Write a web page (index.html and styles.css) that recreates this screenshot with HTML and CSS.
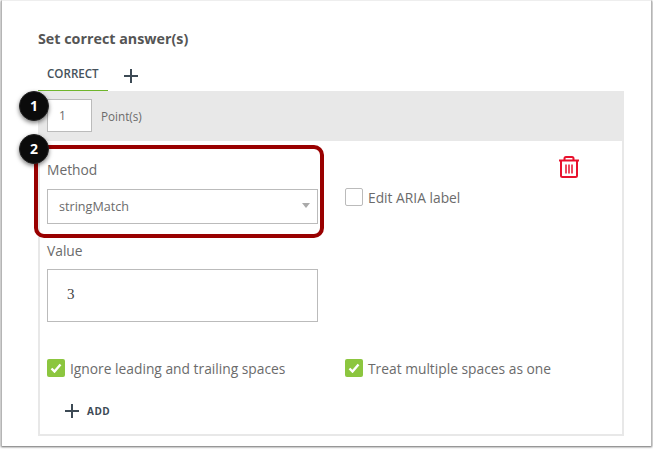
FILE: index.html
```html
<!DOCTYPE html>
<html lang="en">
<head>
    <meta charset="UTF-8">
    <title>Set correct answer(s)</title>
    <link rel="stylesheet" href="styles.css">
</head>
<body>
    <div class="frame">
        <h1 class="title">Set correct answer(s)</h1>
        <div class="tabs">
            <div class="tab">CORRECT</div>
            <svg class="tab-add" width="14" height="14" viewBox="0 0 14 14"><path d="M7 0v14M0 7h14" stroke="#3d4a55" stroke-width="2"/></svg>
        </div>
        <div class="card">
            <div class="points">
                <div class="points-input">1</div>
                <span class="points-label">Point(s)</span>
            </div>
            <div class="card-body">
                <div class="method-row">
                    <div class="col">
                        <div class="label">Method</div>
                        <div class="select">stringMatch<span class="arrow"></span></div>
                    </div>
                    <label class="check aria">
                        <span class="box"></span>Edit ARIA label
                    </label>
                    <svg class="trash" width="20" height="22" viewBox="0 0 20 22" fill="none" stroke="#e8112d" stroke-width="2">
                        <path d="M0 4.500h20"/>
                        <path d="M5.500 4.500V2.500Q5.500 1 7 1h6q1.500 0 1.500 1.500v2"/>
                        <path d="M2 4.500v15Q2 21 3.500 21h13q1.500 0 1.500-1.500v-15"/>
                        <path d="M7 8.500v9M10 8.500v9M13 8.500v9" stroke-width="1.500"/>
                    </svg>
                </div>
                <div class="label value-label">Value</div>
                <div class="value-input">3</div>
                <div class="checks">
                    <label class="check"><span class="box on"><svg width="12" height="10" viewBox="0 0 12 10"><path d="M1.500 5.500l3 3 6-7" fill="none" stroke="#fff" stroke-width="2.400"/></svg></span>Ignore leading and trailing spaces</label>
                    <label class="check"><span class="box on"><svg width="12" height="10" viewBox="0 0 12 10"><path d="M1.500 5.500l3 3 6-7" fill="none" stroke="#fff" stroke-width="2.400"/></svg></span>Treat multiple spaces as one</label>
                </div>
                <div class="add">
                    <svg width="14" height="14" viewBox="0 0 14 14"><path d="M7 0v14M0 7h14" stroke="#3d4a55" stroke-width="2"/></svg>
                    <span>ADD</span>
                </div>
            </div>
        </div>

        <!-- annotations on top of the screenshot -->
        <div class="highlight"></div>
        <div class="badge badge-1">1</div>
        <div class="badge badge-2">2</div>
    </div>
</body>
</html>
```

FILE: styles.css
```css
html, body {
    margin: 0;
    padding: 0;
    background: #fff;
}
body {
    width: 653px;
    height: 449px;
    overflow: hidden;
    font-family: "Open Sans", sans-serif;
    color: #6b6b6b;
}
.frame {
    position: relative;
    box-sizing: border-box;
    width: 651px;
    height: 446px;
    margin-left: 1px;
    padding: 29px 28px 0 36px;
    background: #fff;
    border-top: 1px solid #eee;
    border-left: 1px solid #b5b5b5;
    border-right: 1px solid #b5b5b5;
    box-shadow: 0 1px 2px rgba(0, 0, 0, .6);
}
.title {
    margin: 0;
    font-size: 14.3px;
    line-height: 17px;
    font-weight: 700;
    color: #555;
}
.tabs {
    display: flex;
    align-items: center;
    margin-top: 11px;
    height: 33px;
}
.tab {
    box-sizing: border-box;
    width: 70px;
    height: 33px;
    padding: 8px 0 0 9px;
    border-bottom: 1px solid #6fb52c;
    font-size: 11.6px;
    line-height: 16px;
    font-weight: 600;
    color: #46525c;
}
.tab-add {
    margin: 2px 0 0 16px;
}
.card {
    box-sizing: border-box;
    width: 586px;
    height: 345px;
    border: 1px solid #e8e8e8;
    border-top: 0;
    border-width: 0 2px 2px 2px;
}
.points {
    display: flex;
    align-items: center;
    height: 50px;
    margin: 0 -2px;
    padding-left: 9px;
    background: #e8e8e8;
}
.points-input {
    box-sizing: border-box;
    width: 45px;
    height: 33px;
    margin-top: -1px;
    padding-left: 11px;
    background: #fff;
    border: 1px solid #bbb;
    font-size: 12px;
    line-height: 31px;
}
.points-label {
    margin-left: 9px;
    font-size: 11.7px;
}
.card-body {
    padding: 19px 0 0 7px;
}
.method-row {
    display: flex;
    align-items: flex-start;
}
.col {
    width: 271px;
}
.label {
    font-size: 13.8px;
    line-height: 20px;
}
.select {
    position: relative;
    box-sizing: border-box;
    height: 35px;
    margin-top: 9px;
    padding-left: 11px;
    border: 1px solid #bbb;
    font-size: 12.6px;
    line-height: 33px;
}
.arrow {
    position: absolute;
    right: 7px;
    top: 13px;
    border-left: 4px solid transparent;
    border-right: 4px solid transparent;
    border-top: 5px solid #aaa;
}
.check {
    display: flex;
    align-items: flex-start;
    font-size: 13.8px;
    line-height: 20px;
}
.aria {
    margin: 28px 0 0 27px;
}
.box {
    box-sizing: border-box;
    display: flex;
    align-items: center;
    justify-content: center;
    width: 18px;
    height: 18px;
    margin-right: 5px;
    border: 1px solid #bbb;
    border-radius: 2px;
}
.box.on {
    background: #8cc63f;
    border: 0;
}
.trash {
    margin: -4px 0 0 auto;
    margin-right: 43px;
}
.value-label {
    margin-top: 17px;
}
.value-input {
    box-sizing: border-box;
    width: 271px;
    height: 53px;
    margin-top: 8px;
    padding-left: 19px;
    border: 1px solid #bbb;
    font-family: "Liberation Serif", serif;
    font-size: 15px;
    line-height: 48px;
    color: #444;
}
.checks {
    display: grid;
    grid-template-columns: 271px 1fr;
    column-gap: 27px;
    margin-top: 37px;
}
.add {
    display: flex;
    align-items: center;
    margin: 25px 0 0 18px;
    font-size: 10px;
    line-height: 14px;
    font-weight: 700;
    letter-spacing: .5px;
    color: #3d4a55;
}
.add span {
    margin-left: 8px;
}
.highlight {
    position: absolute;
    left: 32px;
    top: 144px;
    box-sizing: border-box;
    width: 290px;
    height: 93px;
    border: 4px solid #990000;
    border-radius: 10px;
}
.badge {
    position: absolute;
    left: 17px;
    box-sizing: border-box;
    width: 30px;
    height: 30px;
    border-radius: 50%;
    background: #0b0b0b;
    border: 1px solid #222;
    box-shadow: 0 2px 4px rgba(0, 0, 0, .5);
    text-align: center;
    font-size: 14px;
    line-height: 27px;
    font-weight: 700;
    color: #fff;
}
.badge-1 {
    top: 90px;
}
.badge-2 {
    top: 133px;
}
```
